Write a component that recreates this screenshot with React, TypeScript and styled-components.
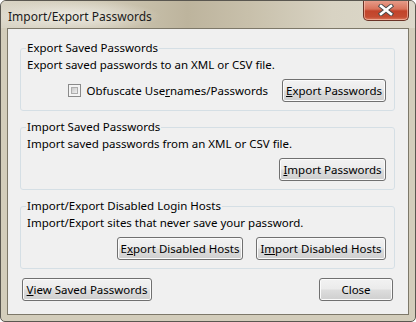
import React from "react";
import styled, { createGlobalStyle } from "styled-components";

const GlobalStyle = createGlobalStyle`
  html, body { margin: 0; padding: 0; background: #ffffff; }
  body { font-family: "Noto Sans", "Open Sans", sans-serif; font-size: 11.5px; color: #000; }
  * { box-sizing: border-box; }
`;

const Window = styled.div`
  width: 416px;
  height: 322px;
  display: flex;
  flex-direction: column;
  padding: 0 6px 6px;
  border: 1px solid #5a5750;
  border-radius: 6px 6px 5px 5px;
  background: #d3cdbb;
  overflow: hidden;
`;

const TitleBar = styled.div`
  height: 28px;
  margin: 0 -6px;
  padding: 0 6px 0 7px;
  display: flex;
  align-items: flex-start;
  background:
    radial-gradient(ellipse 90px 16px at 70px 15px, rgba(240, 238, 232, 0.9), rgba(240, 238, 232, 0) 100%),
    linear-gradient(to right, #d9d4c5 0%, #cfc8b4 25%, #bdb49d 45%, #c8c0ab 60%, #d8d3c3 80%, #ddd8ca 100%);
`;

const Title = styled.span`
  padding-top: 8px;
  font-size: 12px;
  line-height: 16px;
  color: #1a1a1a;
`;

const CloseBox = styled.div`
  margin-left: auto;
  margin-top: -1px;
  width: 46px;
  height: 21px;
  display: flex;
  align-items: center;
  justify-content: center;
  border: 1px solid #6b3326;
  border-top: none;
  border-radius: 0 0 5px 5px;
  background: linear-gradient(#e8a08e 0%, #d9735b 45%, #c2432a 55%, #c44c32 85%, #dc7c60 100%);
  box-shadow: inset 0 0 0 1px rgba(255, 210, 195, 0.55);
`;

const Client = styled.div`
  flex: 1;
  display: flex;
  flex-direction: column;
  gap: 9px;
  padding: 12px 13px 13px 12px;
  border: 1px solid #7d7869;
  background: #f0f0f0;
`;

const Group = styled.fieldset`
  margin: 0;
  padding: 2px 8px 8px 6px;
  border: 1px solid #d5dfe5;
  border-radius: 3px;
  display: flex;
  flex-direction: column;
  gap: 6px;
`;

const Legend = styled.legend`
  margin-left: -1px;
  padding: 0 1px;
  line-height: 14px;
`;

const Desc = styled.div`
  line-height: 16px;
`;

const Row = styled.div<{ $gap: number }>`
  display: flex;
  justify-content: flex-end;
  align-items: center;
  gap: ${(p) => p.$gap}px;
`;

const Button = styled.button<{ $w: number }>`
  width: ${(p) => p.$w}px;
  height: 23px;
  padding: 0;
  font: inherit;
  color: #000;
  border: 1px solid #707070;
  border-radius: 3px;
  background: linear-gradient(#f2f2f2 0%, #ebebeb 48%, #dddddd 52%, #cfcfcf 100%);
  box-shadow: inset 0 0 0 1px #fbfbfb;
  line-height: 20px;
`;

const CheckLabel = styled.label`
  display: flex;
  align-items: center;
  gap: 6px;
  line-height: 16px;
`;

const Box = styled.span`
  flex: none;
  width: 13px;
  height: 13px;
  border: 1px solid #8a8a8a;
  background: #f4f4f4;
  padding: 2px;
  display: flex;
  span {
    flex: 1;
    border: 1px solid #adadad;
    background: linear-gradient(135deg, #c8c8c8, #f0f0f0);
  }
`;

const Footer = styled.div`
  margin-top: auto;
  display: flex;
  justify-content: space-between;
  padding: 0 2px 0 2px;
`;

const K = ({ t, i }: { t: string; i: number }) => (
  <>
    {t.slice(0, i)}
    <u>{t[i]}</u>
    {t.slice(i + 1)}
  </>
);

export default function App() {
  return (
    <>
      <GlobalStyle />
      <Window>
        <TitleBar>
          <Title>Import/Export Passwords</Title>
          <CloseBox>
            <svg width="16" height="12" viewBox="0 0 16 12">
              <path d="M3 2 L13 10 M13 2 L3 10" stroke="#4a4a4a" strokeWidth="4.4" strokeLinecap="square" />
              <path d="M3 2 L13 10 M13 2 L3 10" stroke="#ffffff" strokeWidth="2.6" strokeLinecap="square" />
            </svg>
          </CloseBox>
        </TitleBar>
        <Client>
          <Group>
            <Legend>Export Saved Passwords</Legend>
            <Desc>Export saved passwords to an XML or CSV file.</Desc>
            <Row $gap={14}>
              <CheckLabel>
                <Box><span /></Box>
                <span><K t="Obfuscate Usernames/Passwords" i={13} /></span>
              </CheckLabel>
              <Button $w={104}><K t="Export Passwords" i={0} /></Button>
            </Row>
          </Group>
          <Group>
            <Legend>Import Saved Passwords</Legend>
            <Desc>Import saved passwords from an XML or CSV file.</Desc>
            <Row $gap={13}>
              <Button $w={107}><K t="Import Passwords" i={0} /></Button>
            </Row>
          </Group>
          <Group>
            <Legend>Import/Export Disabled Login Hosts</Legend>
            <Desc>Import/Export sites that never save your password.</Desc>
            <Row $gap={13}>
              <Button $w={126}><K t="Export Disabled Hosts" i={1} /></Button>
              <Button $w={130}><K t="Import Disabled Hosts" i={1} /></Button>
            </Row>
          </Group>
          <Footer>
            <Button $w={130}><K t="View Saved Passwords" i={0} /></Button>
            <Button $w={74}>Close</Button>
          </Footer>
        </Client>
      </Window>
    </>
  );
}
